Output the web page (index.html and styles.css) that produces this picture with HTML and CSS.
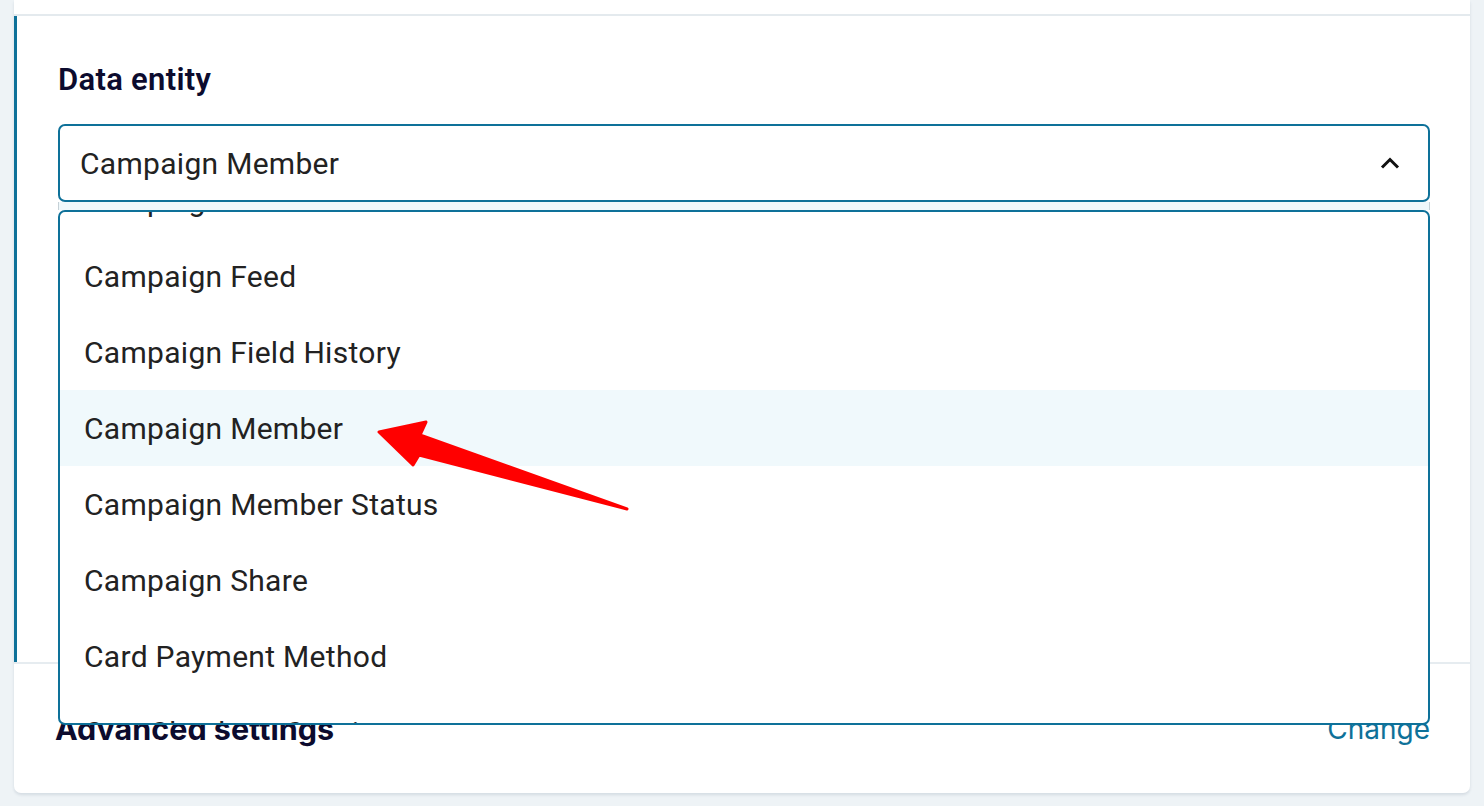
FILE: index.html
```html
<!DOCTYPE html>
<html lang="en">
<head>
<meta charset="utf-8">
<title>Data entity</title>
<link rel="stylesheet" href="styles.css">
</head>
<body>
<div class="card">
  <div class="card-top"></div>
  <section class="step step-active">
    <div class="field-label">Data entity</div>
    <div class="select-wrap">
      <div class="select">
        <span class="select-value">Campaign Member</span>
        <svg class="chevron" width="20" height="12" viewBox="0 0 20 12"><path d="M2 10.5 L10 2.5 L18 10.5"/></svg>
      </div>
      <div class="dropdown">
        <div class="dropdown-gap"></div>
        <div class="dropdown-list">
          <ul class="options">
            <li class="option">Campaign</li>
            <li class="option">Campaign Feed</li>
            <li class="option">Campaign Field History</li>
            <li class="option option-hover">Campaign Member</li>
            <li class="option">Campaign Member Status</li>
            <li class="option">Campaign Share</li>
            <li class="option">Card Payment Method</li>
            <li class="option">Cart Checkout Session</li>
          </ul>
        </div>
      </div>
    </div>
    <div class="step-spacer"></div>
  </section>
  <section class="step step-summary">
    <div class="summary-title">Advanced settings</div>
    <a class="summary-link">Change</a>
  </section>
</div>
<svg class="annotation-arrow" width="290" height="120" viewBox="360 410 290 120">
  <polygon points="379,432 426,422 420,435 627,509 419,455 413,465"/>
</svg>
</body>
</html>
```

FILE: styles.css
```css
html, body {
  margin: 0;
  padding: 0;
}

body {
  background: #eef3f6;
  font-family: Roboto, "Liberation Sans", sans-serif;
  width: 1484px;
  height: 806px;
  overflow: hidden;
  position: relative;
}

.card {
  margin-left: 14px;
  width: 1456px;
  background: #ffffff;
  border-radius: 0 0 7px 7px;
  box-shadow: 0 2px 3px rgba(30, 60, 90, 0.12);
}

.card-top {
  height: 14px;
  border-bottom: 2px solid #e4eaee;
}

.step-active {
  border-left: 3px solid #0e7199;
  padding: 46px 40px 0 41px;
}

.field-label {
  font-family: Roboto, "Liberation Sans", sans-serif;
  font-weight: 600;
  font-size: 31px;
  line-height: 36px;
  letter-spacing: 0.3px;
  color: #0c0b2e;
}

.select-wrap {
  position: relative;
  margin-top: 26px;
}

.select {
  box-sizing: border-box;
  height: 78px;
  border: 2px solid #0e7199;
  border-radius: 7px;
  display: flex;
  align-items: center;
  justify-content: space-between;
  padding: 0 28px 0 20px;
}

.select-value {
  font-size: 30px;
  letter-spacing: 0.3px;
  color: #222222;
}

.chevron {
  display: block;
}

.chevron path {
  fill: none;
  stroke: #111111;
  stroke-width: 3;
}

.dropdown {
  position: absolute;
  top: 100%;
  left: 0;
  right: 0;
  z-index: 10;
}

.dropdown-gap {
  height: 8px;
  background: #eff8fb;
  border-left: 1px solid #c5d0d6;
  border-right: 1px solid #c5d0d6;
}

.dropdown-list {
  box-sizing: border-box;
  height: 515px;
  border: 2px solid #0e7199;
  border-radius: 7px;
  background: #ffffff;
  overflow: hidden;
}

.options {
  list-style: none;
  margin: -50px 0 0;
  padding: 0;
}

.option {
  height: 76px;
  line-height: 78px;
  padding-left: 24px;
  font-size: 30px;
  letter-spacing: 0.3px;
  color: #222222;
  white-space: nowrap;
}

.option-hover {
  background: #f0f9fc;
}

.step-spacer {
  height: 460px;
}

.step-summary {
  box-sizing: border-box;
  height: 131px;
  border-top: 2px solid #e6ecf0;
  display: flex;
  align-items: center;
  justify-content: space-between;
  padding: 0 40px 0 41px;
}

.summary-title {
  font-family: Inter, "Noto Sans", sans-serif;
  font-weight: 700;
  font-size: 30.5px;
  color: #0c0b2e;
}

.summary-link {
  font-family: Inter, "Noto Sans", sans-serif;
  font-size: 28px;
  color: #0e7199;
}

.annotation-arrow {
  position: absolute;
  left: 360px;
  top: 410px;
  z-index: 20;
}

.annotation-arrow polygon {
  fill: #ff0000;
  stroke: #ff0000;
  stroke-width: 3;
  stroke-linejoin: round;
}
```
